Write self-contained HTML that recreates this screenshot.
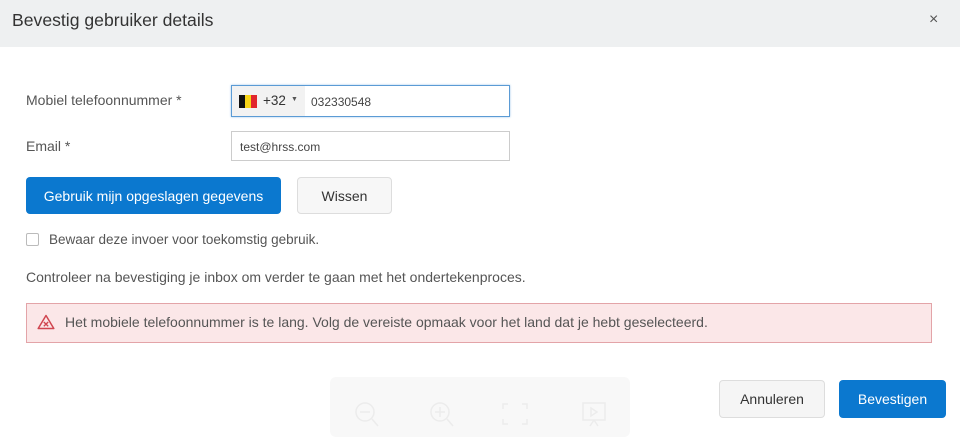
<!DOCTYPE html>
<html><head><style>
body{margin:0;width:960px;height:428px;overflow:hidden;background:#fff;font-family:"Liberation Sans",sans-serif;position:relative;color:#444}
.a{position:absolute}
.hdr{left:0;top:0;width:960px;height:47px;background:#eef0f1}
.lbl{font-size:14px;color:#555}
.inp{border:1px solid #ccc;background:#fff;box-sizing:border-box;font-size:12px;color:#444}
.btn{box-sizing:border-box;border-radius:4px;font-size:13.5px;display:flex;align-items:center;justify-content:center}
</style></head><body>
<div class="a hdr"></div>
<div class="a" style="left:12px;top:10px;font-size:17.6px;color:#333">Bevestig gebruiker details</div>
<div class="a" style="left:929px;top:11px;font-size:16px;color:#555">×</div>

<div class="a lbl" style="left:26px;top:92px">Mobiel telefoonnummer *</div>
<div class="a inp" style="left:231px;top:85px;width:279px;height:32px;border:1px solid #5b9bd5;box-shadow:0 0 2px #9cc3e8">
  <div class="a" style="left:0;top:0;width:73px;height:30px;background:#f2f2f2"></div>
  <div class="a" style="left:7px;top:9px;width:6px;height:13px;background:#111"></div>
  <div class="a" style="left:13px;top:9px;width:6px;height:13px;background:#f7d417"></div>
  <div class="a" style="left:19px;top:9px;width:6px;height:13px;background:#e1262d"></div>
  <div class="a" style="left:31px;top:7px;font-size:13.5px;color:#333">+32</div>
  <div class="a" style="left:59px;top:10px;font-size:7px;color:#555">▼</div>
  <div class="a" style="left:79px;top:9px">032330548</div>
</div>
<div class="a lbl" style="left:26px;top:138px">Email *</div>
<div class="a inp" style="left:231px;top:131px;width:279px;height:30px"><div class="a" style="left:8px;top:8px">test@hrss.com</div></div>

<div class="a btn" style="left:26px;top:177px;width:255px;height:37px;background:#0b78cf;color:#fff;font-size:14px">Gebruik mijn opgeslagen gegevens</div>
<div class="a btn" style="left:297px;top:177px;width:95px;height:37px;background:#f7f7f7;border:1px solid #ddd;color:#333;font-size:14px">Wissen</div>

<div class="a" style="left:26px;top:233px;width:13px;height:13px;border:1px solid #bbb;border-radius:2px;box-sizing:border-box"></div>
<div class="a" style="left:49px;top:232px;font-size:13.5px;color:#555">Bewaar deze invoer voor toekomstig gebruik.</div>
<div class="a" style="left:26px;top:269px;font-size:14px;color:#555">Controleer na bevestiging je inbox om verder te gaan met het ondertekenproces.</div>

<div class="a" style="left:26px;top:303px;width:906px;height:40px;box-sizing:border-box;background:#fbe7e8;border:1px solid #e3a4a8"></div>
<svg class="a" style="left:37px;top:314px" width="18" height="16" viewBox="0 0 18 16"><path d="M9 1.5 L16.8 14.5 H1.2 Z" fill="none" stroke="#d04650" stroke-width="1.5" stroke-linejoin="round"/><path d="M6.8 8 L11.2 12.2 M11.2 8 L6.8 12.2" stroke="#d04650" stroke-width="1.4"/></svg>
<div class="a" style="left:65px;top:314px;font-size:14px;color:#555">Het mobiele telefoonnummer is te lang. Volg de vereiste opmaak voor het land dat je hebt geselecteerd.</div>

<div class="a" style="left:330px;top:377px;width:300px;height:60px;background:#f8f8f8;border-radius:6px"></div>
<svg class="a" style="left:350px;top:400px" width="260" height="28" viewBox="0 0 260 28" fill="none" stroke="#ececec" stroke-width="1.5"><circle cx="15" cy="12" r="9"/><path d="M10 12h10M22 19l6 7"/><circle cx="90" cy="12" r="9"/><path d="M85 12h10M90 7v10M97 19l6 7"/><path d="M158 4h-5v5M172 4h5v5M158 24h-5v-5M172 24h5v-5"/><rect x="233" y="3" width="22" height="17"/><path d="M241 8l6 4-6 4z M244 20l-4 6M244 20l4 6"/></svg>

<div class="a btn" style="left:719px;top:380px;width:106px;height:38px;background:#f5f5f5;border:1px solid #ddd;color:#333;font-size:14px">Annuleren</div>
<div class="a btn" style="left:839px;top:380px;width:107px;height:38px;background:#0b78cf;color:#fff;font-size:14px">Bevestigen</div>
</body></html>
